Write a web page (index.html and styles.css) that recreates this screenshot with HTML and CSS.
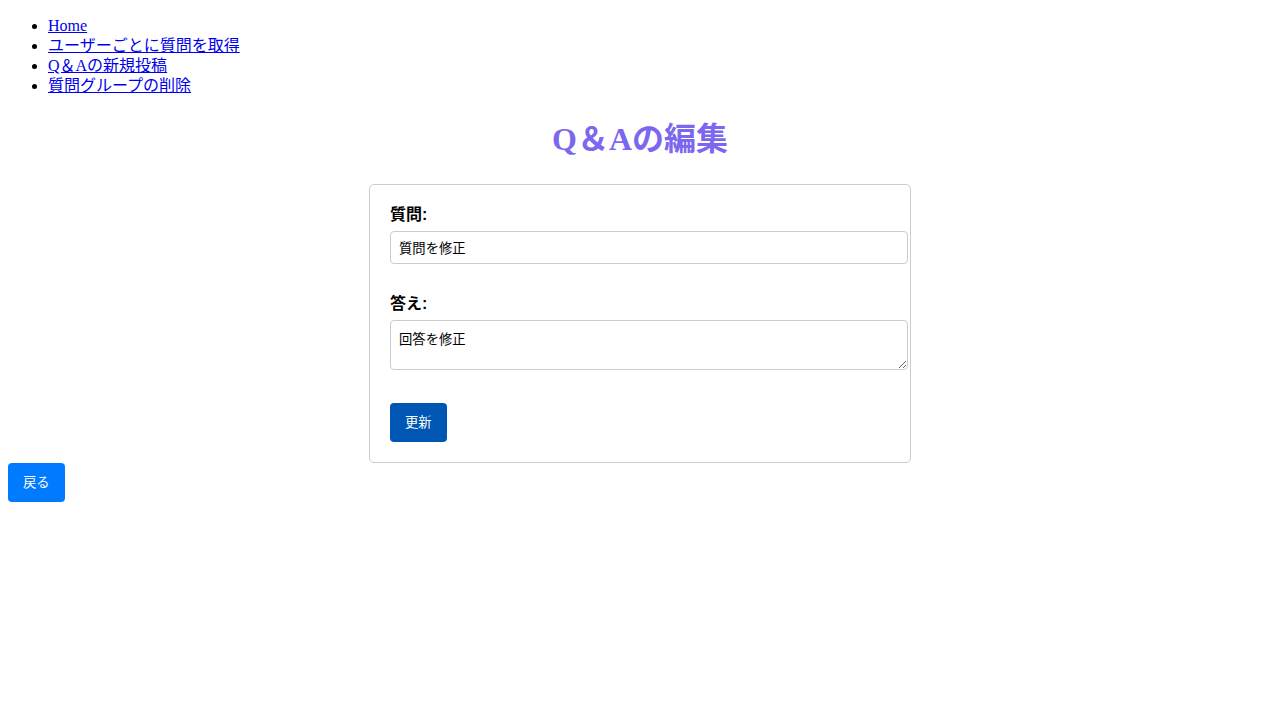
FILE: index.html
```html
<!DOCTYPE html>
<html lang="ja">
<head>
<meta charset="utf-8">
<title>Q＆Aの編集</title>
<link rel="stylesheet" href="styles.css">
</head>
<body>
<ul class="nav">
  <li><a href="#">Home</a></li>
  <li><a href="#">ユーザーごとに質問を取得</a></li>
  <li><a href="#">Q＆Aの新規投稿</a></li>
  <li><a href="#">質問グループの削除</a></li>
</ul>
<h1 class="title">Q＆Aの編集</h1>
<form class="edit-form">
  <div class="form-group">
    <label class="label" for="q">質問:</label>
    <input class="field" id="q" type="text" value="質問を修正">
  </div>
  <div class="form-group">
    <label class="label" for="a">答え:</label>
    <textarea class="field area" id="a">回答を修正</textarea>
  </div>
  <button class="btn btn-submit" type="button">更新</button>
</form>
<button class="btn btn-back" type="button">戻る</button>
</body>
</html>
```
FILE: styles.css
```css
body {
  margin: 8px;
  font-family: "Liberation Serif", "Noto Sans CJK JP", serif;
  font-size: 16px;
  color: #000;
}
.nav {
  margin: 8px 0 16px;
  padding-left: 40px;
  line-height: 20px;
}
.nav a {
  color: #0000ee;
}
.title {
  text-align: center;
  color: #7b68ee;
  font-size: 32px;
  line-height: 37px;
  margin: 25px 0 26px;
}
.edit-form {
  width: 500px;
  margin: 0 auto;
  padding: 20px;
  border: 1px solid #ccc;
  border-radius: 5px;
  font-family: "Liberation Sans", "Noto Sans CJK JP", sans-serif;
}
.form-group {
  margin-bottom: 30px;
}
.form-group:last-of-type {
  margin-bottom: 33px;
}
.label {
  display: block;
  font-weight: bold;
  font-size: 16px;
  line-height: 20px;
  margin-bottom: 6px;
}
.field {
  display: block;
  width: 100%;
  padding: 8px;
  border: 1px solid #ccc;
  border-radius: 4px;
  font-family: "Liberation Sans", "Noto Sans CJK JP", sans-serif;
  font-size: 13.33px;
  margin: 0;
}
.area {
  height: 32px;
  resize: vertical;
}
.btn {
  display: block;
  border: none;
  border-radius: 4px;
  color: #fff;
  padding: 9px 15px 11px;
  font-family: "Liberation Sans", "Noto Sans CJK JP", sans-serif;
  font-size: 13.33px;
  cursor: pointer;
}
.btn-submit {
  background: #0056b3;
}
.btn-back {
  background: #007bff;
}
```
